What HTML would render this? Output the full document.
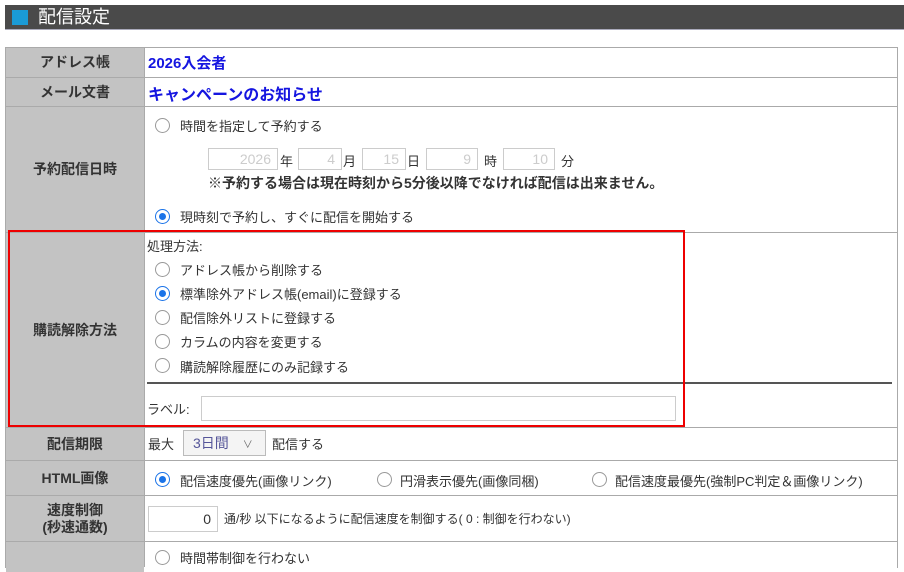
<!DOCTYPE html>
<html><head><meta charset="utf-8"><style>
body{margin:0;width:904px;height:562px;background:#fff;position:relative;overflow:hidden;font-family:"Liberation Sans","Noto Sans CJK JP",sans-serif;color:#333;font-size:13px}
.a{position:absolute;white-space:nowrap}
.hdr{left:5px;top:5px;width:899px;height:24px;background:#4a4a4a;border-bottom:1px solid #aab}
.sq{left:12px;top:10px;width:16px;height:15px;background:#1a9ad6}
.ttl{left:38px;top:5px;color:#fff;font-size:18px;line-height:24px}
.lab{position:absolute;left:6px;width:138px;background:#c3c3c3;font-weight:bold;text-align:center;color:#333;display:flex;align-items:center;justify-content:center;line-height:17px;font-size:14px}
.hl{position:absolute;left:5px;width:892px;height:1px;background:#aaa}
.r{position:absolute;width:13px;height:13px;border:1px solid #999;border-radius:50%;background:#fff}
.r.on{border-color:#1a73e8}
.r.on::after{content:"";position:absolute;left:3px;top:3px;width:7px;height:7px;border-radius:50%;background:#1a73e8}
.in{position:absolute;height:22px;border:1px solid #ccc;background:#fff;color:#ccc;text-align:right;box-sizing:border-box;padding-right:6px;line-height:20px;font-size:14px}
</style></head><body>
<div class="a hdr"></div><div class="a sq"></div><div class="a ttl">配信設定</div>

<div class="a" style="left:5px;top:47px;width:891px;height:520px;border:1px solid #aaa;border-bottom:none"></div>
<div class="a" style="left:144px;top:47px;width:1px;height:520px;background:#aaa"></div>
<div class="lab" style="top:48px;height:29px">アドレス帳</div>
<div class="lab" style="top:78px;height:28px">メール文書</div>
<div class="lab" style="top:107px;height:125px">予約配信日時</div>
<div class="lab" style="top:233px;height:194px">購読解除方法</div>
<div class="lab" style="top:428px;height:32px">配信期限</div>
<div class="lab" style="top:461px;height:34px">HTML画像</div>
<div class="lab" style="top:496px;height:45px">速度制御<br>(秒速通数)</div>
<div class="lab" style="top:542px;height:30px"></div>
<div class="hl" style="top:77px"></div><div class="hl" style="top:106px"></div><div class="hl" style="top:232px"></div><div class="hl" style="top:427px"></div><div class="hl" style="top:460px"></div><div class="hl" style="top:495px"></div><div class="hl" style="top:541px"></div>

<div class="a" style="left:148px;top:52px;color:#1515e0;font-weight:bold;font-size:15px">2026入会者</div>
<div class="a" style="left:148px;top:81px;color:#1515e0;font-weight:bold;font-size:16px">キャンペーンのお知らせ</div>

<div class="r" style="left:155px;top:118px"></div><div class="a" style="left:180px;top:116px">時間を指定して予約する</div>
<div class="in" style="left:208px;top:148px;width:70px">2026</div><div class="a" style="left:280px;top:151px">年</div>
<div class="in" style="left:298px;top:148px;width:44px">4</div><div class="a" style="left:343px;top:151px">月</div>
<div class="in" style="left:362px;top:148px;width:44px">15</div><div class="a" style="left:407px;top:151px">日</div>
<div class="in" style="left:426px;top:148px;width:52px">9</div><div class="a" style="left:484px;top:151px">時</div>
<div class="in" style="left:503px;top:148px;width:52px">10</div><div class="a" style="left:561px;top:151px">分</div>
<div class="a" style="left:208px;top:173px;font-weight:bold;font-size:14px">※予約する場合は現在時刻から5分後以降でなければ配信は出来ません。</div>
<div class="r on" style="left:155px;top:209px"></div><div class="a" style="left:180px;top:207px">現時刻で予約し、すぐに配信を開始する</div>

<div class="a" style="left:147px;top:236px">処理方法:</div>
<div class="r" style="left:155px;top:262px"></div><div class="a" style="left:180px;top:260px">アドレス帳から削除する</div>
<div class="r on" style="left:155px;top:286px"></div><div class="a" style="left:180px;top:284px">標準除外アドレス帳(email)に登録する</div>
<div class="r" style="left:155px;top:310px"></div><div class="a" style="left:180px;top:308px">配信除外リストに登録する</div>
<div class="r" style="left:155px;top:334px"></div><div class="a" style="left:180px;top:332px">カラムの内容を変更する</div>
<div class="r" style="left:155px;top:358px"></div><div class="a" style="left:180px;top:357px">購読解除履歴にのみ記録する</div>
<div class="a" style="left:147px;top:382px;width:745px;height:2px;background:#555"></div>
<div class="a" style="left:147px;top:399px">ラベル:</div>
<div class="in" style="left:201px;top:396px;width:475px;height:25px"></div>
<div class="a" style="left:8px;top:230px;width:673px;height:193px;border:2px solid #e00"></div>

<div class="a" style="left:148px;top:434px">最大</div>
<div class="a" style="left:183px;top:430px;width:83px;height:26px;border:1px solid #bbb;background:#f4f4f4;box-sizing:border-box;color:#559;line-height:24px;padding-left:9px;font-size:14px">3日間 <span style="font-size:10px;margin-left:10px;color:#666">∨</span></div>
<div class="a" style="left:272px;top:434px">配信する</div>

<div class="r on" style="left:155px;top:472px"></div><div class="a" style="left:180px;top:471px">配信速度優先(画像リンク)</div>
<div class="r" style="left:377px;top:472px"></div><div class="a" style="left:400px;top:471px">円滑表示優先(画像同梱)</div>
<div class="r" style="left:592px;top:472px"></div><div class="a" style="left:615px;top:471px">配信速度最優先(強制PC判定＆画像リンク)</div>

<div class="in" style="left:148px;top:506px;width:70px;height:26px;color:#333;line-height:24px">0</div>
<div class="a" style="left:224px;top:510px;font-size:12px">通/秒 以下になるように配信速度を制御する( 0 : 制御を行わない)</div>

<div class="r" style="left:155px;top:550px"></div><div class="a" style="left:180px;top:548px">時間帯制御を行わない</div>
</body></html>
